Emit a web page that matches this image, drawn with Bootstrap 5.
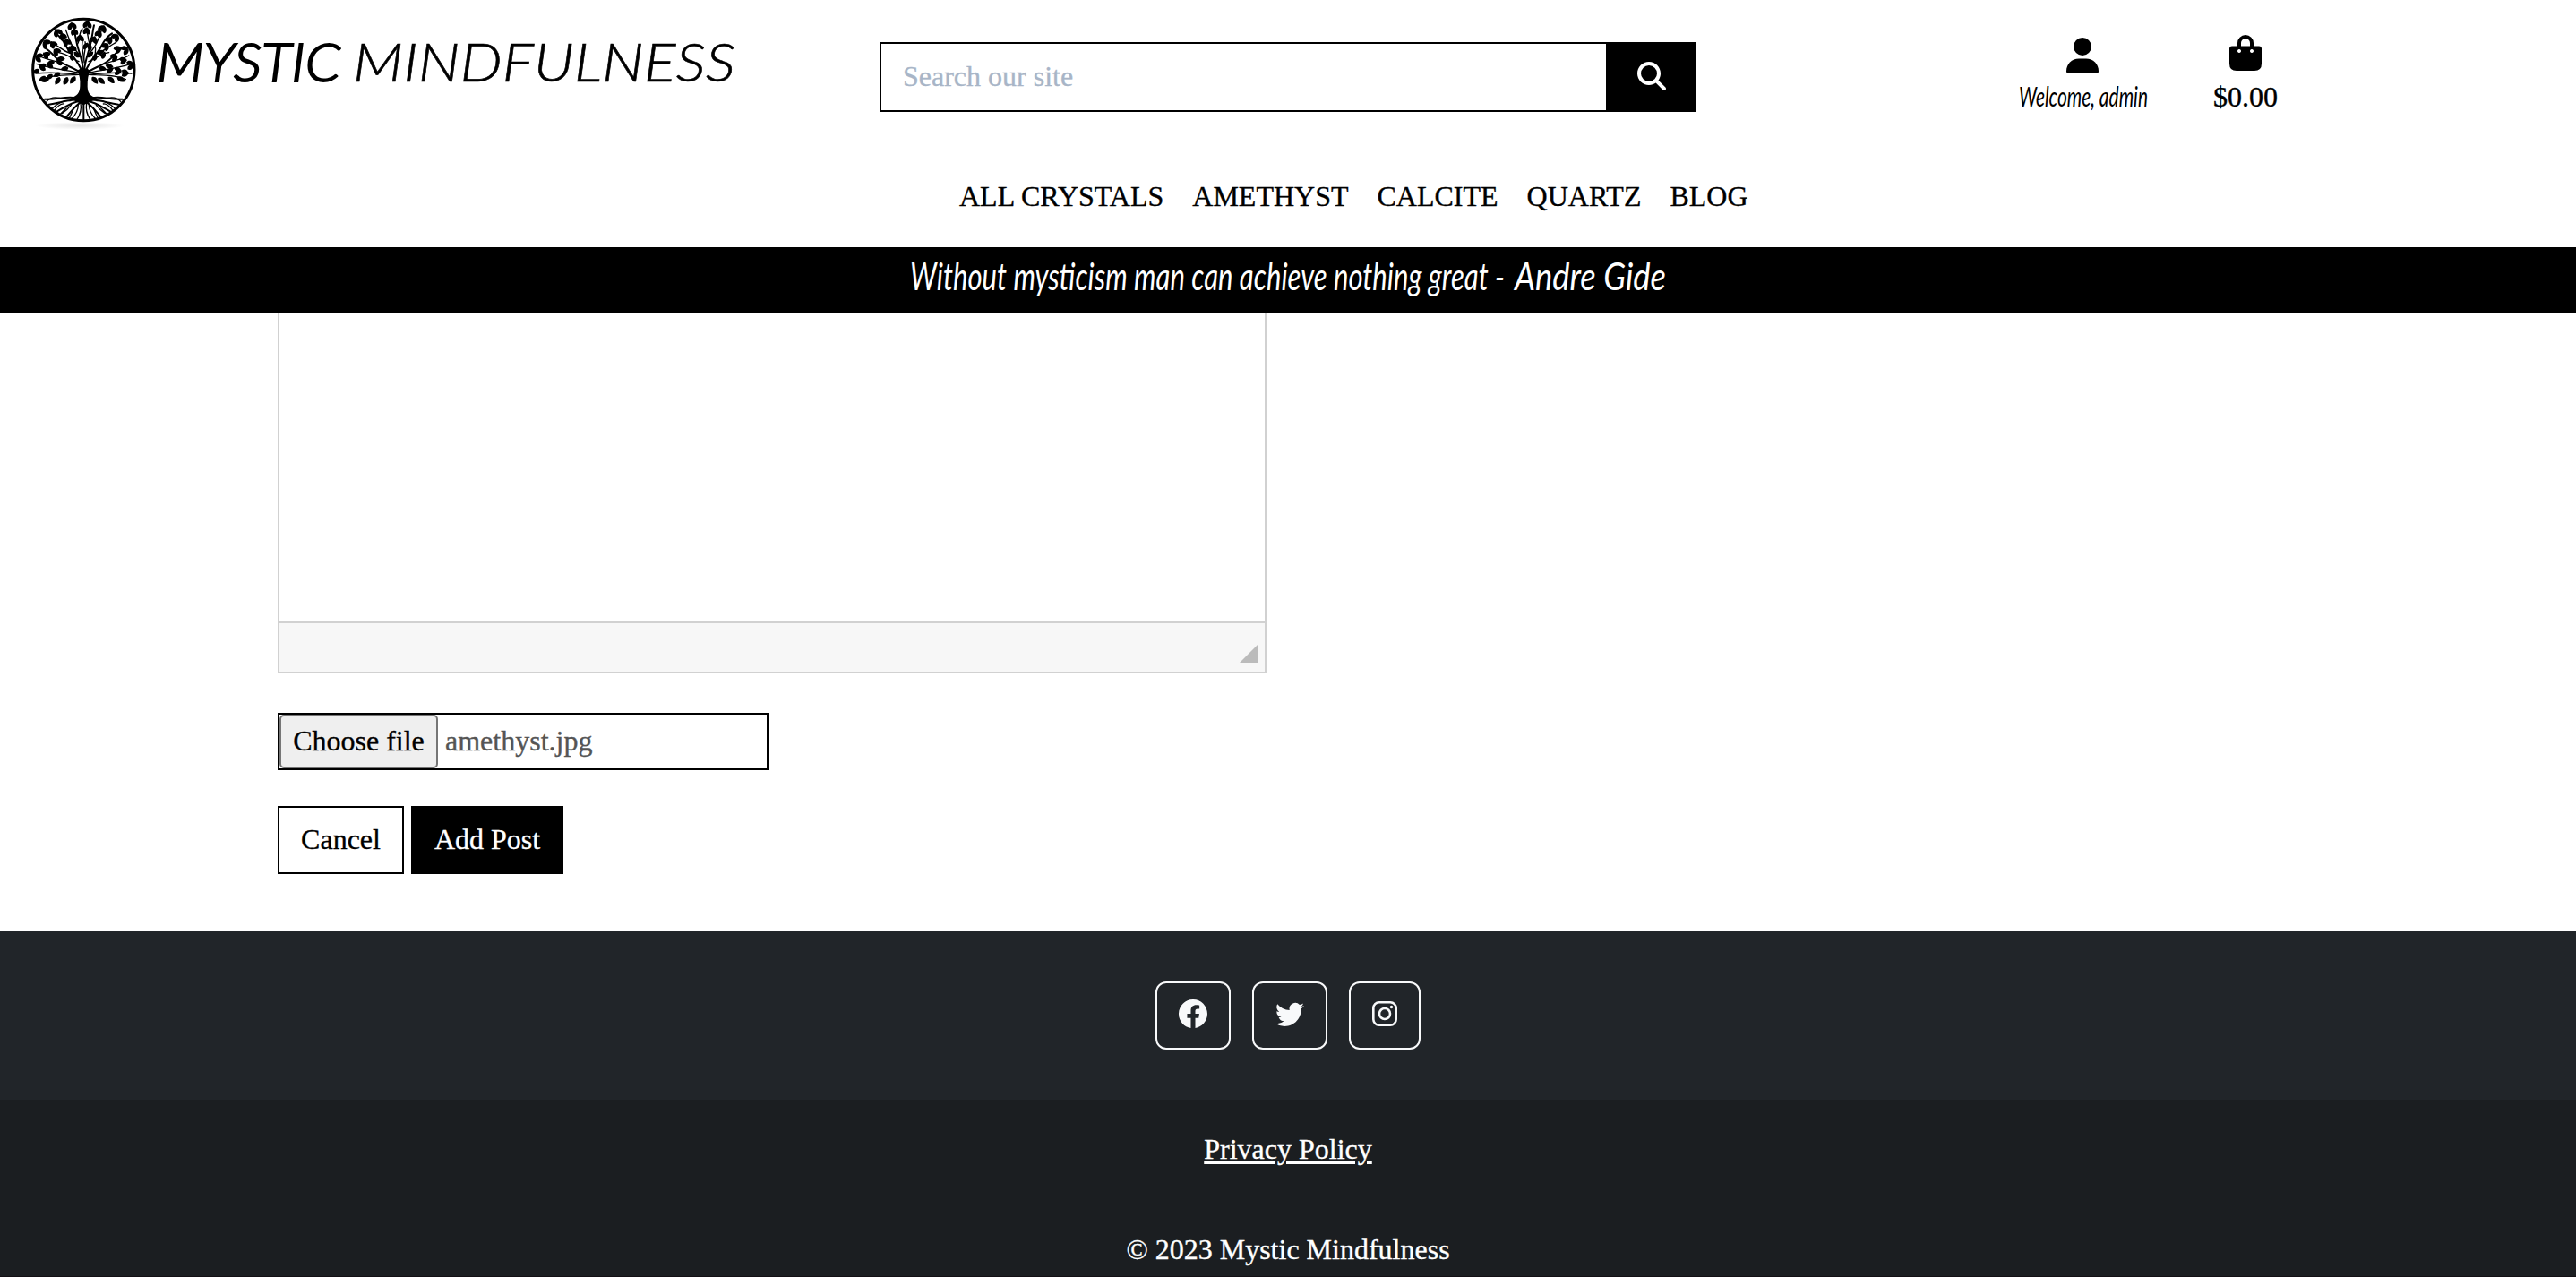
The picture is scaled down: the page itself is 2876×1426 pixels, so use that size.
<!DOCTYPE html>
<html lang="en">
<head>
<meta charset="utf-8">
<title>Mystic Mindfulness</title>
<link href="https://cdn.jsdelivr.net/npm/bootstrap@5.3.0/dist/css/bootstrap.min.css" rel="stylesheet">
<style>
html, body { height: 1426px; overflow: hidden; }
body { font: 32px/48px "Liberation Serif", serif; color: #000; background: #fff; -webkit-text-stroke: .35px; }
header { height: 276px; }
.top-row { height: 172px; }
.brand-link { padding: 16px 0 0 33px; width: 982px; color: #000; }
.brand-name { font: italic 300 59px/60px Lato, sans-serif; padding: 25px 0 0 20px; }
.brand-name svg, .quote-bar svg, .welcome svg { display: block; overflow: visible; }
.script-font { font-family: Lato, sans-serif; font-style: italic; }
.search-box { width: 912px; height: 78px; margin-top: 47px; }
.search-box .form-control { border: 2px solid #000; padding: 0 24px 2px 24px; font-size: 32px; line-height: 48px; color: #000; }
.search-box .form-control::placeholder { color: #a8b5c7; opacity: 1; }
.search-box .btn { width: 100px; padding: 0 0 2px; background: #000; border: 0; }
.account-links { padding: 38px 0 0 358px; }
.welcome { width: 148px; }
.total { width: 72px; margin-left: 71px; }
.total span { display: block; padding-top: 5px; }
.main-links { gap: 32px; padding: 23px 0 0 1071px; }
.main-links a { color: #000; text-decoration: none; white-space: nowrap; }
.quote-bar { height: 74px; background: #000; }
main { height: 690px; padding-left: 310px; }
.editor { width: 1104px; height: 402px; border: 2px solid #d1d1d1; border-top: 0; }
.editor-foot { height: 56px; border-top: 2px solid #d1d1d1; background: #f7f7f7; padding: 0 8px 10px 0; }
.file-field { width: 548px; height: 64px; border: 2px solid #000; margin-top: 44px; color: #555; }
.file-field span { padding: 0 0 2px 8px; }
.file-field button { height: 60px; width: 177px; padding: 0 0 2px; border: 2px solid #767676; border-radius: 5px; background: #efefef; color: #000; line-height: 48px; }
.actions { gap: 8px; margin-top: 40px; }
.actions .btn { height: 76px; border: 2px solid #000; border-radius: 0; font-size: 32px; line-height: 48px; padding: 10px 0 12px; color: #000; }
.actions .btn-cancel { width: 141px; padding-top: 11px; }
.actions .btn-add, .actions .btn-add:hover { width: 170px; background: #000; color: #fff; }
footer { height: 386px; background: #212529; color: #fff; }
.social { height: 188px; padding-top: 56px; gap: 24px; }
.social .btn { height: 76px; border: 2px solid #f8f9fa; border-radius: 12px; padding: 18px 0 0; width: 84px; color: #f8f9fa; }
.social .btn:last-child { width: 80px; }
.social svg { display: block; margin: 0 auto; }
.legal { height: 198px; background: #1b1e21; border-bottom: 1px solid #130f14; padding-top: 31px; }
.legal a { color: #fff; text-underline-offset: 3px; text-decoration-thickness: 3px; }
.legal p { margin: 64px 0 0; }
</style>
<script src="https://cdn.jsdelivr.net/npm/bootstrap@5.3.0/dist/js/bootstrap.bundle.min.js"></script>
</head>
<body>
<header>
  <div class="top-row d-flex align-items-start">
    <a class="brand-link d-flex align-items-start text-decoration-none flex-shrink-0" href="#">
      <svg width="122" height="130" viewBox="99 48 366 390" fill="none" stroke="#000" stroke-linecap="round">
        <defs>
          <radialGradient id="ground"><stop offset="0" stop-color="#000" stop-opacity=".1"/><stop offset="1" stop-color="#000" stop-opacity="0"/></radialGradient>
          <path id="leaf" d="M0 0C6-12 19-12 30 0C19 11 6 10 0 0Z" fill="#000" stroke="none"/>
          <clipPath id="disc"><circle cx="280" cy="234" r="169"/></clipPath>
          <g id="half">
            <path stroke-width="6" d="M278 250C250 225 215 222 190 196S160 165 148 160M276 242C262 205 235 180 222 155S200 120 186 112M279 240C278 205 262 170 256 140S250 100 246 85"/>
            <path stroke-width="4" d="M270 245C225 235 180 232 122 214M265 250C220 245 180 240 120 246M262 250C220 252 175 250 140 266M232 177C214 172 190 150 172 142M262 178C240 160 232 130 220 100M258 150C270 135 262 110 276 96M210 215C180 200 150 200 130 186M264 206C240 198 230 182 196 176M242 196C246 180 238 170 242 158M278 210C285 180 270 165 276 140"/>
          </g>
        </defs>
        <ellipse cx="268" cy="421" rx="150" ry="13" fill="url(#ground)" stroke="none"/>
        <circle cx="280" cy="234" r="170" stroke-width="9"/>
        <g clip-path="url(#disc)">
          <use href="#half"/><use href="#half" transform="matrix(-1 0 0 1 561 0)"/>
          <g id="leaves"></g>
          <path fill="#000" stroke="none" d="M258 236Q281 222 303 236Q292 254 293 290C294 314 302 320 326 330L280 352L234 330C260 320 267 312 268 288Q270 254 258 236Z"/>
          <path stroke-width="6" d="M255 328C220 322 190 334 150 332M262 334C225 334 200 345 164 350M268 338C240 342 215 360 190 374M274 340C255 350 240 372 222 392M306 328C340 322 370 334 410 332M298 334C335 334 360 345 396 350M292 338C320 342 345 360 370 374M286 340C305 350 320 372 338 392M280 340V402"/>
          <path stroke-width="4" d="M236 338Q210 332 176 362M238 352Q226 368 208 380M262 350Q262 375 240 398M270 345Q275 375 258 400M214 348Q200 346 182 370M324 338Q350 332 384 362M322 352Q334 368 352 380M298 350Q298 375 320 398M290 345Q285 375 302 400M346 348Q360 346 378 370M248 360Q240 380 232 396M312 360Q320 380 328 396M200 328Q170 322 156 340M360 328Q390 322 404 340M222 362L198 386M338 362L362 386"/>
        </g>
      </svg>
      <span class="brand-name"><svg width="650" height="60" fill="#000" stroke="#000"><text x="0" y="50" stroke-width="1.900" textLength="205" lengthAdjust="spacingAndGlyphs">MYSTIC</text><text x="219" y="50" stroke-width=".6" textLength="427" lengthAdjust="spacingAndGlyphs">MINDFULNESS</text></svg></span>
    </a>
    <form class="search-box input-group flex-shrink-0 flex-nowrap">
      <input class="form-control rounded-0 shadow-none" type="text" placeholder="Search our site" aria-label="Search">
      <button class="btn rounded-0" type="button" aria-label="Submit search">
        <svg width="32" height="32" viewBox="0 0 512 512" fill="#fff"><path d="M416 208c0 45.900-14.900 88.300-40 122.700L502.600 457.400c12.500 12.500 12.500 32.800 0 45.300s-32.800 12.500-45.300 0L330.700 376c-34.400 25.200-76.800 40-122.700 40C93.100 416 0 322.900 0 208S93.100 0 208 0S416 93.100 416 208zM208 352a144 144 0 1 0 0-288 144 144 0 1 0 0 288z"/></svg>
      </button>
    </form>
    <div class="account-links d-flex align-items-start">
      <a class="welcome text-black text-decoration-none d-block" href="#">
        <svg class="mx-auto" width="42" height="46" viewBox="0 0 42 46"><circle cx="20" cy="14" r="10"/><path d="M16 27.500h8c8 0 14 6 14 14q0 2.500-2.500 2.500h-31q-2.500 0-2.500-2.500c0-8 6-14 14-14z"/></svg>
        <svg width="148" height="44"><text class="script-font" x="2" y="35" font-size="30" textLength="144" lengthAdjust="spacingAndGlyphs">Welcome, admin</text></svg>
      </a>
      <a class="total text-black text-decoration-none d-block text-center" href="#">
        <svg class="d-block mx-auto" width="36" height="41" viewBox="0 0 36 41"><path d="M11 16V10a7 7 0 0 1 14 0V16" fill="none" stroke="#000" stroke-width="4"/><path fill-rule="evenodd" d="M3 13.500H33Q36 13.500 36 16.500V33Q36 41 28 41H8Q0 41 0 33V16.500Q0 13.500 3 13.500ZM11 17a2 2 0 1 0 .01 0ZM25 17a2 2 0 1 0 .01 0Z"/></svg>
        <span>$0.00</span>
      </a>
    </div>
  </div>
  <nav class="main-links d-flex"><a href="#">ALL CRYSTALS</a><a href="#">AMETHYST</a><a href="#">CALCITE</a><a href="#">QUARTZ</a><a href="#">BLOG</a></nav>
</header>
<div class="quote-bar d-flex justify-content-center">
  <svg width="844" height="74" fill="#fff" font-size="43"><text class="script-font" x="0" y="48" textLength="664" lengthAdjust="spacingAndGlyphs">Without mysticism man can achieve nothing great -</text><text class="script-font" x="675" y="48" textLength="169" lengthAdjust="spacingAndGlyphs">Andre Gide</text></svg>
</div>
<main>
  <div class="editor d-flex flex-column justify-content-end">
    <div class="editor-foot d-flex justify-content-end align-items-end"><svg width="20" height="20"><path d="M20 0V20H0Z" fill="#bbb"/></svg></div>
  </div>
  <div class="file-field d-flex align-items-center"><button type="button">Choose file</button><span>amethyst.jpg</span></div>
  <div class="actions d-flex"><a class="btn btn-cancel" href="#">Cancel</a><button class="btn btn-add" type="button">Add Post</button></div>
</main>
<footer>
  <div class="social d-flex justify-content-center align-items-start">
    <a class="btn" href="#" aria-label="Facebook"><svg width="32" height="32" viewBox="0 0 16 16" fill="currentColor"><path d="M16 8.049c0-4.446-3.582-8.050-8-8.050C3.580 0-.002 3.603-.002 8.050c0 4.017 2.926 7.347 6.750 7.951v-5.625h-2.030V8.050H6.750V6.275c0-2.017 1.195-3.131 3.022-3.131.876 0 1.791.157 1.791.157v1.980h-1.009c-.993 0-1.303.621-1.303 1.258v1.510h2.218l-.354 2.326H9.250V16c3.824-.604 6.750-3.934 6.750-7.951z"/></svg></a>
    <a class="btn" href="#" aria-label="Twitter"><svg width="32" height="32" viewBox="0 0 16 16" fill="currentColor"><path d="M5.026 15c6.038 0 9.341-5.003 9.341-9.334 0-.14 0-.282-.006-.422A6.685 6.685 0 0 0 16 3.542a6.658 6.658 0 0 1-1.889.518 3.301 3.301 0 0 0 1.447-1.817 6.533 6.533 0 0 1-2.087.793A3.286 3.286 0 0 0 7.875 6.030a9.325 9.325 0 0 1-6.767-3.429 3.289 3.289 0 0 0 1.018 4.382A3.323 3.323 0 0 1 .640 6.575v.045a3.288 3.288 0 0 0 2.632 3.218 3.203 3.203 0 0 1-.865.115 3.230 3.230 0 0 1-.614-.057 3.283 3.283 0 0 0 3.067 2.277A6.588 6.588 0 0 1 .780 13.580a6.320 6.320 0 0 1-.780-.045A9.344 9.344 0 0 0 5.026 15z"/></svg></a>
    <a class="btn" href="#" aria-label="Instagram"><svg width="28" height="32" viewBox="0 0 28 32" fill="none" stroke="currentColor" stroke-width="2.600"><rect x="1.300" y="3.300" width="25.400" height="25.400" rx="6.500"/><circle cx="14" cy="16" r="6"/><circle cx="21.500" cy="8.500" r="1.700" fill="currentColor" stroke="none"/></svg></a>
  </div>
  <div class="legal text-center"><a href="#">Privacy Policy</a><p>© 2023 Mystic Mindfulness</p></div>
</footer>
<script>
// Foliage of the logo: rows of leaves fanning out from the trunk top, [radius, count, from, to] in degrees
var rows = [[54, 6, 200, 340], [78, 11, 182, 358], [104, 17, 178, 362], [128, 23, 176, 364], [148, 19, 185, 355]];
var out = '';
rows.forEach(function (r, k) {
  for (var i = 0; i < r[1]; i++) {
    var a = r[2] + (r[3] - r[2]) * i / (r[1] - 1), t = a * Math.PI / 180;
    var x = 280 + r[0] * Math.cos(t), y = 246 + r[0] * 1.03 * Math.sin(t);
    out += '<use href="#leaf" transform="translate(' + x.toFixed(1) + ' ' + y.toFixed(1) + ') rotate(' + (a + (i % 2 ? 32 : -32)).toFixed(1) + ') scale(.9)"/>';
  }
});
[[200, 258, 120], [226, 258, 115], [165, 262, 160], [252, 256, 125], [308, 258, 50], [328, 262, 40], [362, 258, 45], [392, 260, 25]].forEach(function (p) {
  out += '<use href="#leaf" transform="translate(' + p[0] + ' ' + p[1] + ') rotate(' + p[2] + ')"/>';
});
document.getElementById('leaves').innerHTML = out;
</script>
</body>
</html>
